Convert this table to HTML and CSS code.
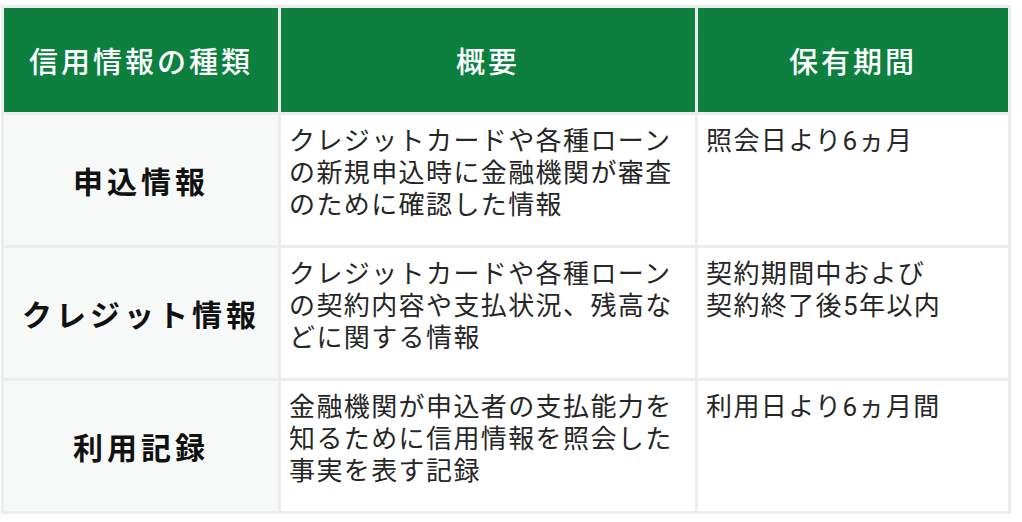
FILE: index.html
```html
<!DOCTYPE html>
<html lang="ja">
<head>
<meta charset="utf-8">
<link rel="stylesheet" href="styles.css">
</head>
<body>
<table class="credit-table">
  <colgroup>
    <col class="c1">
    <col class="c2">
    <col class="c3">
  </colgroup>
  <thead>
    <tr class="head-row">
      <th>信用情報の種類</th>
      <th>概要</th>
      <th>保有期間</th>
    </tr>
  </thead>
  <tbody>
    <tr class="body-row">
      <td class="label">申込情報</td>
      <td class="text">クレジットカードや各種ローンの新規申込時に金融機関が審査のために確認した情報</td>
      <td class="text">照会日より6ヵ月</td>
    </tr>
    <tr class="body-row">
      <td class="label">クレジット情報</td>
      <td class="text">クレジットカードや各種ローンの契約内容や支払状況、残高などに関する情報</td>
      <td class="text">契約期間中および<br>契約終了後5年以内</td>
    </tr>
    <tr class="body-row">
      <td class="label">利用記録</td>
      <td class="text">金融機関が申込者の支払能力を知るために信用情報を照会した事実を表す記録</td>
      <td class="text">利用日より6ヵ月間</td>
    </tr>
  </tbody>
</table>
</body>
</html>
```

FILE: styles.css
```css
html, body {
  margin: 0;
  background: #ffffff;
}
body {
  padding: 5px 0 0 1px;
  font-family: "Roboto", "Noto Sans CJK JP", sans-serif;
  color: #222222;
}
.credit-table {
  width: 1010px;
  table-layout: fixed;
  border-collapse: separate;
  border-spacing: 3px;
  background: #eceeed;
}
.c1 { width: 274px; }
.c2 { width: 414px; }
.c3 { width: 310px; }

.head-row { height: 104px; }
.body-row { height: 130px; }

.credit-table th {
  padding: 0;
  background: #0d8040;
  color: #ffffff;
  font-size: 29px;
  font-weight: 500;
  letter-spacing: 3px;
  text-align: center;
  vertical-align: middle;
}
.credit-table td {
  padding: 0;
  background: #ffffff;
}
.credit-table td.label {
  background: #f7f8f8;
  font-size: 30px;
  font-weight: 700;
  letter-spacing: 4px;
  text-align: center;
  vertical-align: middle;
  color: #111111;
}
.credit-table td.text {
  vertical-align: top;
  padding: 10px 20px 0 8px;
  font-size: 26px;
  line-height: 32px;
  letter-spacing: 1.4px;
  color: #262626;
}
```
